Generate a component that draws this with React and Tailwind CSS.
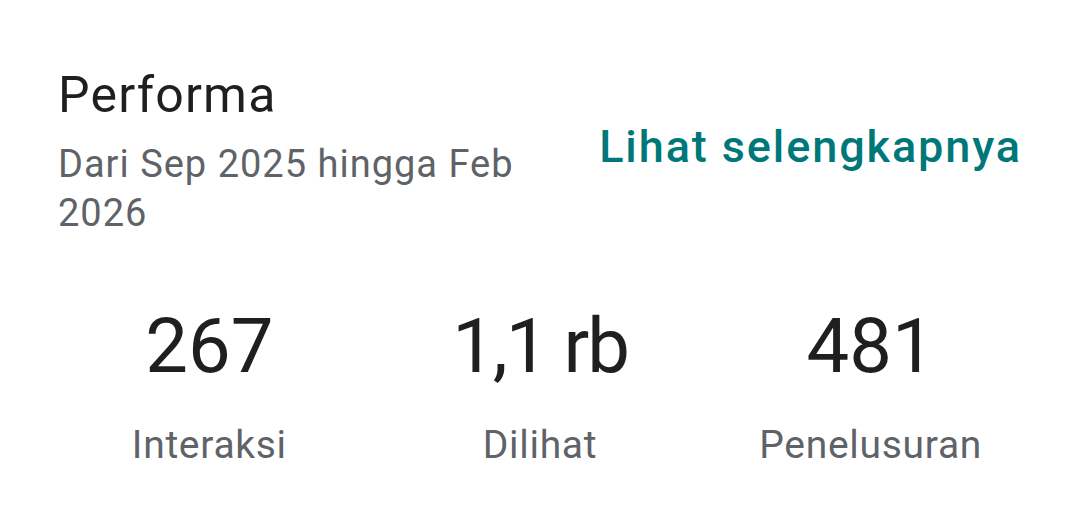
const stats = [
  { value: "267", label: "Interaksi", tight: "" },
  { value: "1,1 rb", label: "Dilihat", tight: "tracking-[-2px]" },
  { value: "481", label: "Penelusuran", tight: "" },
];

export default function App() {
  return (
    <div className="w-[1080px] h-[529px] bg-white font-['Roboto',sans-serif] overflow-hidden">
      <div className="flex items-start justify-between pl-[58px] pr-[58px] pt-[66px]">
        <div className="w-[500px]">
          <h2 className="text-[50px] leading-[58px] tracking-[1.2px] text-[#1f1f1f]">Performa</h2>
          <p className="mt-[16px] text-[38px] leading-[49px] tracking-[1px] text-[#5f6368]">
            Dari Sep 2025 hingga Feb 2026
          </p>
        </div>
        <a className="mt-[54px] text-[45px] leading-[53px] font-medium tracking-[1.9px] text-[#00787a] whitespace-nowrap">
          Lihat selengkapnya
        </a>
      </div>

      <div className="grid grid-cols-3 px-[44px] mt-[62px]">
        {stats.map((s) => (
          <div key={s.label} className="flex flex-col items-center">
            <div className={`text-[76px] leading-[92px] text-[#1f1f1f] ${s.tight}`}>{s.value}</div>
            <div className="mt-[30px] text-[39px] leading-[46px] tracking-[0.7px] text-[#5f6368]">{s.label}</div>
          </div>
        ))}
      </div>
    </div>
  );
}
